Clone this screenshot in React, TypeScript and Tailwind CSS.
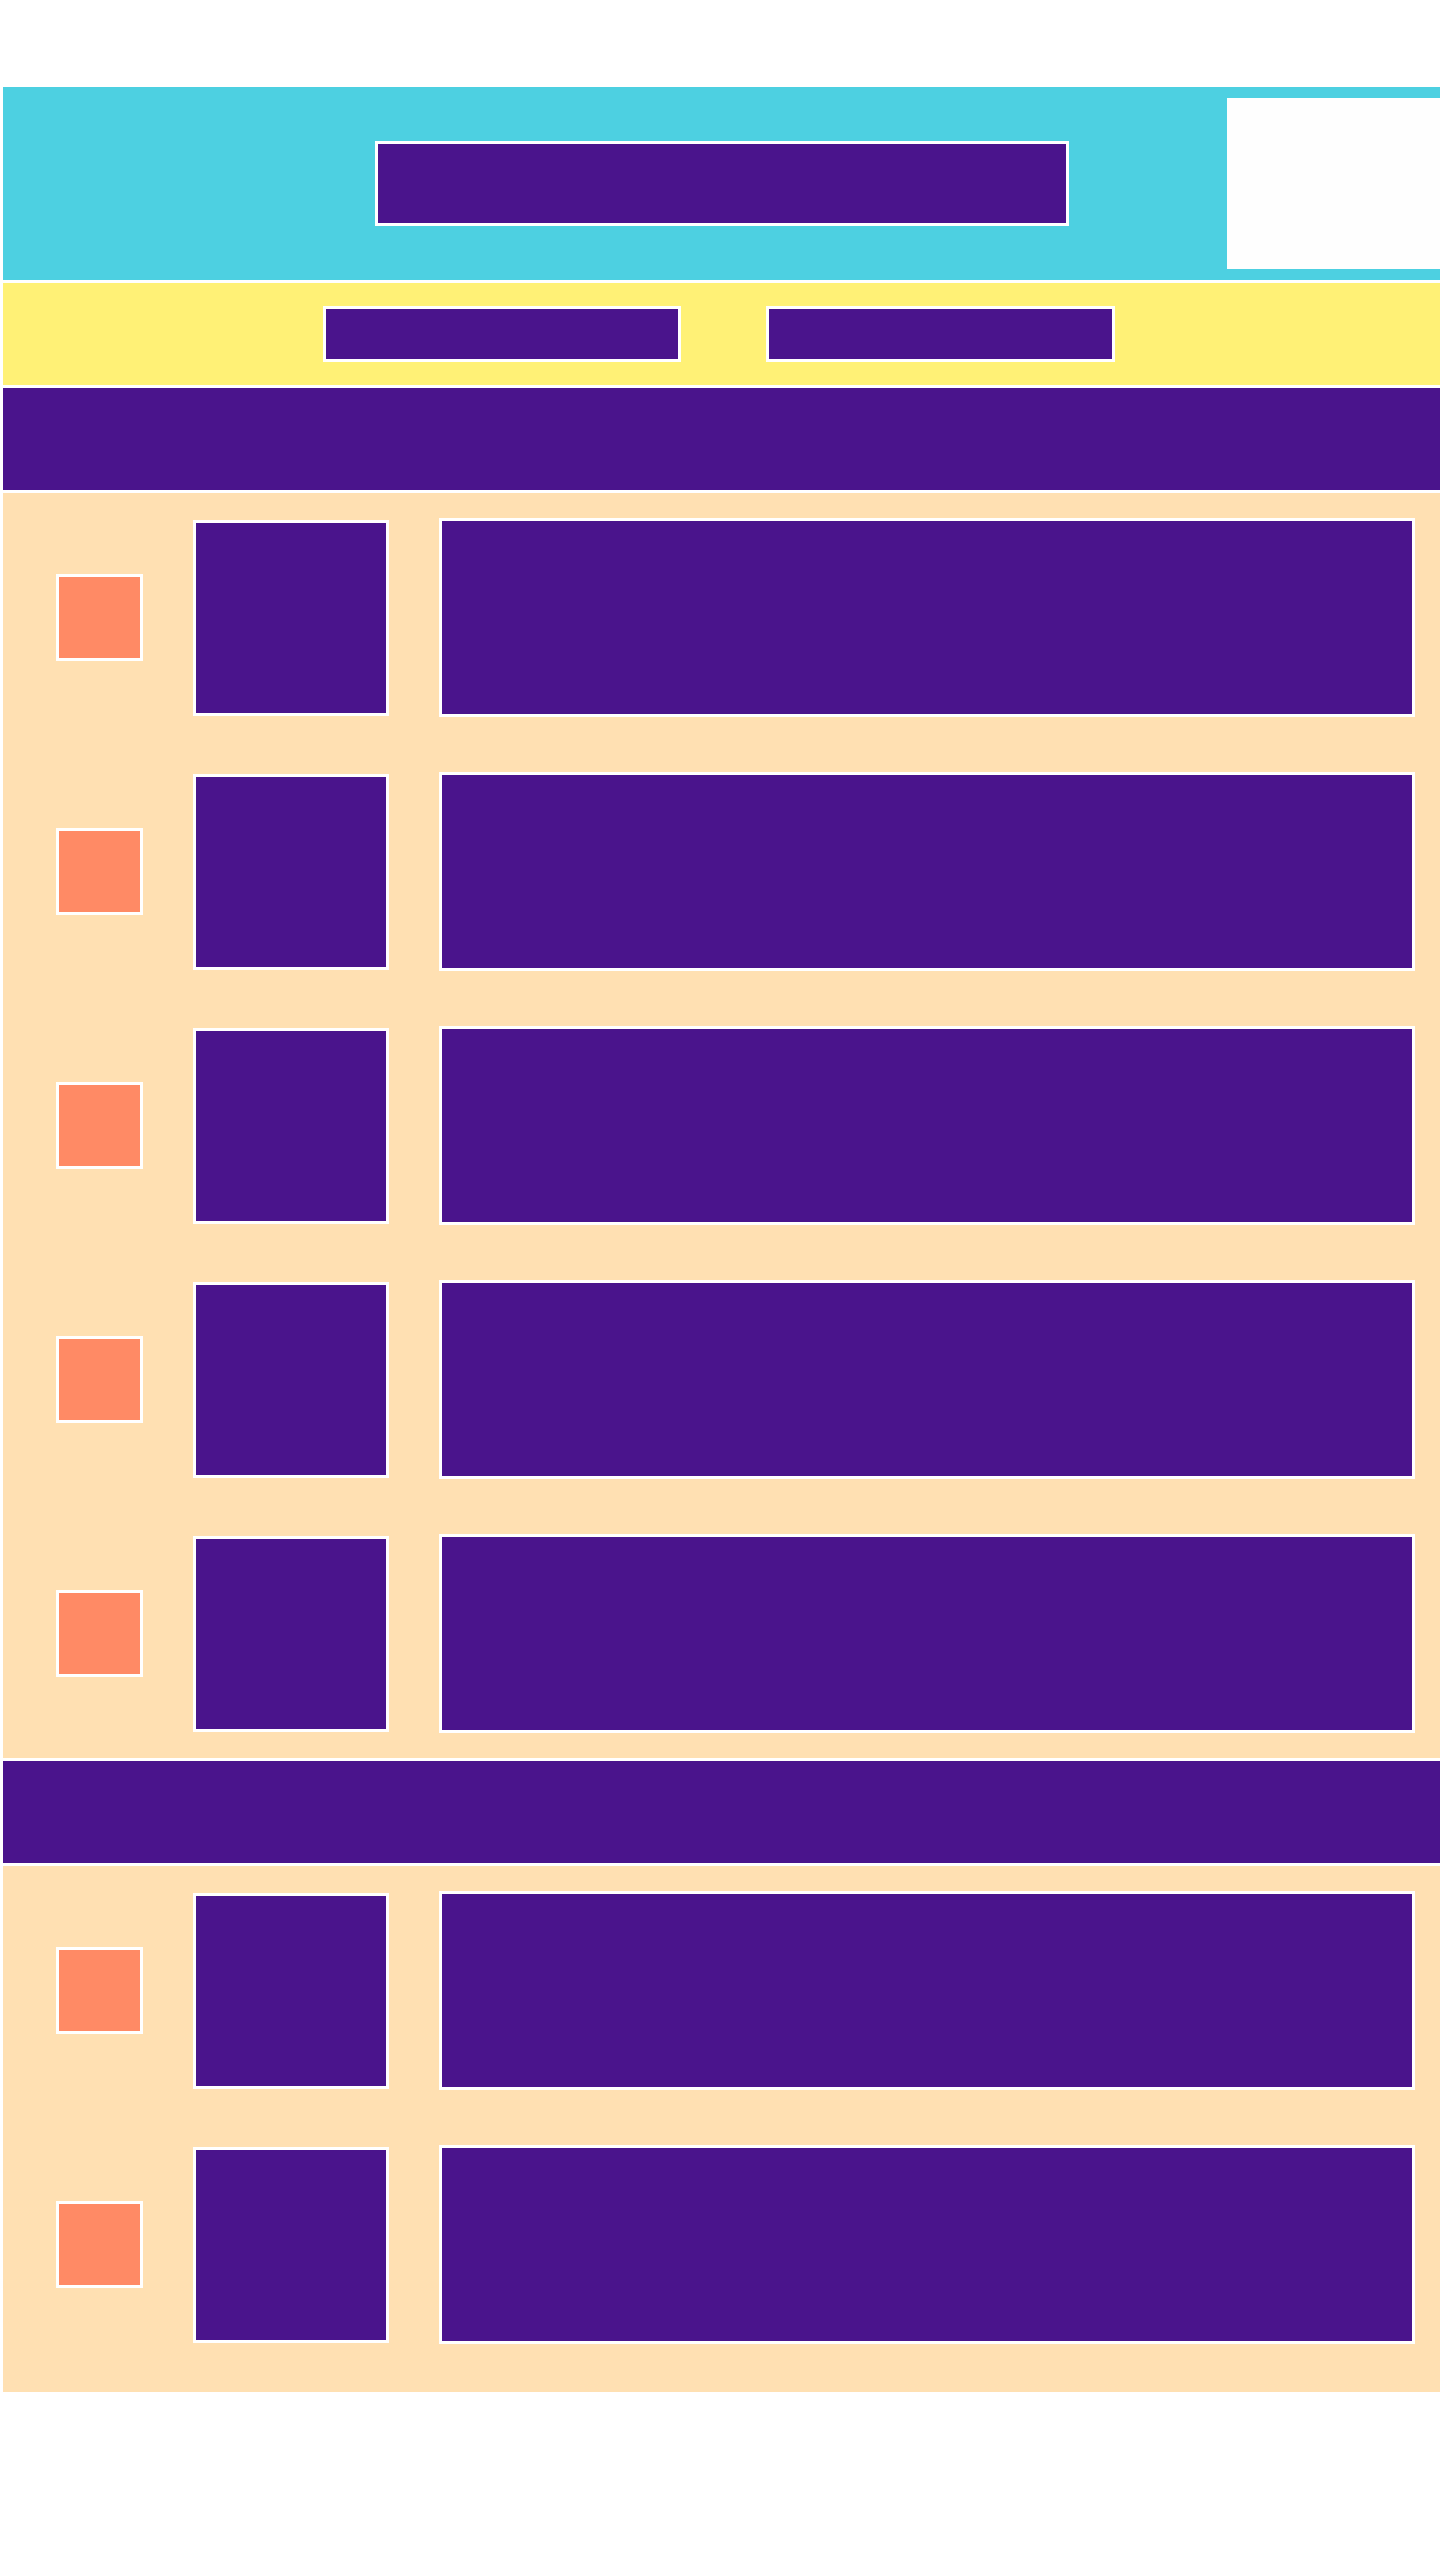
const rowsA = [1, 2, 3, 4, 5];
const rowsB = [1, 2];

function Row() {
  return (
    <div className="flex h-[199px] items-center">
      <div className="h-[87px] w-[87px] shrink-0 border-[3px] border-white bg-[#ff8a65]" />
      <div className="ml-[50px] h-[196px] w-[196px] shrink-0 border-[3px] border-white bg-[#4a148c]" />
      <div className="ml-[50px] h-[199px] w-[976px] shrink-0 border-[3px] border-white bg-[#4a148c]" />
    </div>
  );
}

function ListSection({ rows, bottom }: { rows: number[]; bottom: string }) {
  return (
    <div className={`flex flex-col gap-[55px] bg-[#ffe0b2] pl-[53px] pt-[25px] ${bottom}`}>
      {rows.map((r) => (
        <Row key={r} />
      ))}
    </div>
  );
}

export default function App() {
  return (
    <div className="min-h-[2560px] bg-white pt-[87px] font-['Liberation_Sans',sans-serif]">
      <div className="ml-[3px] flex w-[1437px] flex-col gap-[3px]">
        <header className="grid grid-cols-[213px_1fr_213px] items-center bg-[#4dd0e1] py-[11px]">
          <div />
          <div className="flex justify-center">
            <div className="h-[85px] w-[694px] border-[3px] border-white bg-[#4a148c]" />
          </div>
          <div className="h-[171px] bg-[#fefefe]" />
        </header>

        <nav className="flex h-[102px] items-center gap-[85px] bg-[#fff176] pl-[320px]">
          <div className="h-[56px] w-[358px] border-[3px] border-white bg-[#4a148c]" />
          <div className="h-[56px] w-[349px] border-[3px] border-white bg-[#4a148c]" />
        </nav>

        <div className="h-[102px] bg-[#4a148c]" />
        <ListSection rows={rowsA} bottom="pb-[25px]" />

        <div className="h-[102px] bg-[#4a148c]" />
        <ListSection rows={rowsB} bottom="pb-[48px]" />
      </div>
    </div>
  );
}
